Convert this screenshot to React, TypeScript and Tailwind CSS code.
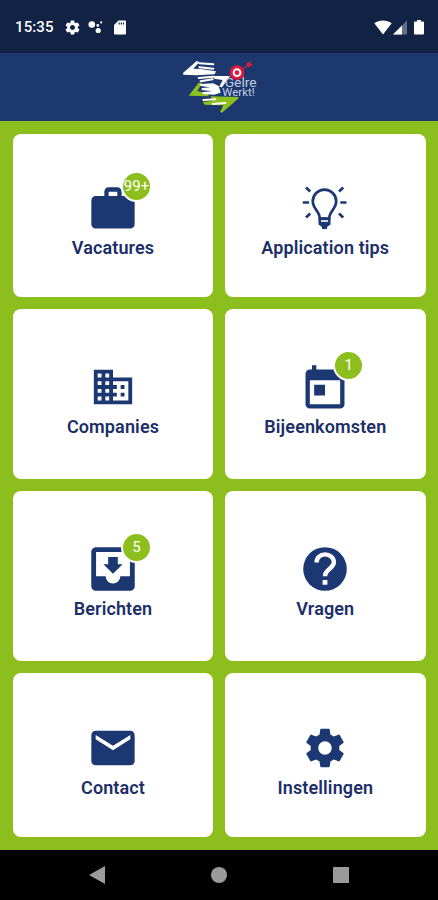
import React from 'react';

interface Tile {
  label: string;
  icon: React.ReactNode;
  badge?: string;
}

const WORK = 'M20 6h-4V4c0-1.11-.89-2-2-2h-4c-1.11 0-2 .89-2 2v2H4c-1.11 0-1.99.89-1.99 2L2 19c0 1.11.89 2 2 2h16c1.11 0 2-.89 2-2V8c0-1.11-.89-2-2-2zm-6 0h-4V4h4v2z';
const BUSINESS = 'M12 7V3H2v18h20V7H12zM6 19H4v-2h2v2zm0-4H4v-2h2v2zm0-4H4V9h2v2zm0-4H4V5h2v2zm4 12H8v-2h2v2zm0-4H8v-2h2v2zm0-4H8V9h2v2zm0-4H8V5h2v2zm10 12h-8v-2h2v-2h-2v-2h2v-2h-2V9h8v10zm-2-8h-2v2h2v-2zm0 4h-2v2h2v-2z';
const TODAY = 'M19 3h-1V1h-2v2H8V1H6v2H5c-1.11 0-1.99.9-1.99 2L3 19c0 1.1.89 2 2 2h14c1.1 0 2-.9 2-2V5c0-1.1-.9-2-2-2zm0 16H5V8h14v11zM7 10h5v5H7v-5z';
const INBOX = 'M19 3H4.99c-1.11 0-1.98.9-1.98 2L3 19c0 1.1.88 2 1.99 2H19c1.1 0 2-.9 2-2V5c0-1.1-.9-2-2-2zm0 12h-4c0 1.66-1.35 3-3 3s-3-1.34-3-3H4.99V5H19v10zm-3-5h-2V7h-4v3H8l4 4 4-4z';
const MAIL = 'M20 4H4c-1.1 0-1.99.9-1.99 2L2 18c0 1.1.9 2 2 2h16c1.1 0 2-.9 2-2V6c0-1.1-.9-2-2-2zm0 4l-8 5-8-5V6l8 5 8-5v2z';
const GEAR = 'M19.43 12.98c.04-.32.07-.64.07-.98s-.03-.66-.07-.98l2.11-1.65c.19-.15.24-.42.12-.64l-2-3.46c-.12-.22-.39-.3-.61-.22l-2.49 1c-.52-.4-1.08-.73-1.69-.98l-.38-2.65C14.46 2.18 14.25 2 14 2h-4c-.25 0-.46.18-.49.42l-.38 2.65c-.61.25-1.17.59-1.69.98l-2.49-1c-.23-.09-.49 0-.61.22l-2 3.46c-.13.22-.07.49.12.64l2.11 1.65c-.04.32-.07.65-.07.98s.03.66.07.98l-2.11 1.65c-.19.15-.24.42-.12.64l2 3.46c.12.22.39.3.61.22l2.49-1c.52.4 1.08.73 1.69.98l.38 2.65c.03.24.24.42.49.42h4c.25 0 .46-.18.49-.42l.38-2.65c.61-.25 1.17-.59 1.69-.98l2.49 1c.23.09.49 0 .61-.22l2-3.46c.12-.22.07-.49-.12-.64l-2.11-1.65zM12 15.5c-1.93 0-3.5-1.57-3.5-3.5s1.57-3.5 3.5-3.5 3.5 1.57 3.5 3.5-1.57 3.5-3.5 3.5z';

function Glyph({ d, className }: { d: string; className: string }) {
  return (
    <svg viewBox="0 0 24 24" fill="currentColor" className={`shrink-0 ${className}`}>
      <path d={d} />
    </svg>
  );
}

function Bulb() {
  return (
    <svg viewBox="0 0 46 44" fill="none" stroke="currentColor" strokeWidth="2.700" className="w-[46px] h-[44px] shrink-0 -mt-[2px]">
      <path d="M17.800 32.500c0-7-7-9.500-7-17.200a11.700 11.700 0 0 1 23.400 0c0 7.700-7 10.200-7 17.200z" />
      <path d="M16.500 31.500h12v7l-3.500 2.500v2h-5v-2l-3.500-2.500z" fill="currentColor" stroke="none" />
      <path d="M19 35h7" stroke="white" strokeWidth="1.600" />
      <path d="M.8 16.500h6.200M38.300 16.500h6.200M4 1.500l4.200 4M41.200 1.500l-4.200 4M4 31.500l4.200-4M41.200 31.500l-4.200-4" />
    </svg>
  );
}

function Help() {
  return (
    <svg viewBox="0 0 44 44" className="w-[44px] h-[44px] shrink-0">
      <circle cx="22" cy="22" r="21.800" fill="currentColor" />
      <path d="M13.600 15.600v-.4c0-4.600 3.700-7.800 8.400-7.800s8.900 3.200 8.900 7.900c0 6.500-8.900 6.400-8.900 14" fill="none" stroke="white" strokeWidth="4.400" />
      <path d="M19.600 33h4.800v4.800h-4.800z" fill="white" />
    </svg>
  );
}

const TILES: Tile[] = [
  { label: 'Vacatures', icon: <Glyph d={WORK} className="size-[52px]" />, badge: '99+' },
  { label: 'Application tips', icon: <Bulb /> },
  { label: 'Companies', icon: <Glyph d={BUSINESS} className="size-[46px]" /> },
  { label: 'Bijeenkomsten', icon: <Glyph d={TODAY} className="size-[52px] mt-1" />, badge: '1' },
  { label: 'Berichten', icon: <Glyph d={INBOX} className="size-[58px]" />, badge: '5' },
  { label: 'Vragen', icon: <Help /> },
  { label: 'Contact', icon: <Glyph d={MAIL} className="size-[52px]" /> },
  { label: 'Instellingen', icon: <Glyph d={GEAR} className="size-[46px]" /> },
];

function Logo() {
  return (
    <svg viewBox="0 9 300 204" className="w-[100px] h-[68px]">
      {/* green hand */}
      <path d="M86 98l10 2-14 24 32 4 2 11-60-2zM122 139l82 2 2 4-50 43-6-2 10-20-56-2-6-8 30-4z" fill="#8cc01d" />
      {/* white hand */}
      <path d="M80 33l8 3-18 20 22 1 46 7-4 9-56 3-38-2-1-5z" fill="white" />
      <path d="M88 40l42 3M88 52l42 4M86 84l44-4M92 94l36-6" stroke="white" strokeWidth="6" strokeLinecap="round" />
      <path d="M132 78h48l-24 34-8-2 10-20-26-4z" fill="white" />
      <path d="M90 102l40-2 16 8 6 20-20 6-36-2 4-6 26-2-32-4 2-6 24-2-28-4z" fill="white" />
      <path d="M100 150l36-2M128 162l38-3" stroke="white" strokeWidth="6" strokeLinecap="round" />
      {/* wordmark */}
      <g fill="#c3cfe4" fontFamily="Roboto, 'Liberation Sans', sans-serif" fontWeight="400">
        <text x="164" y="110" fontSize="37" textLength="96" lengthAdjust="spacingAndGlyphs">Gelre</text>
        <text x="157" y="139" fontSize="33" textLength="97" lengthAdjust="spacingAndGlyphs">Werkt!</text>
      </g>
      {/* target */}
      <path d="M202 68L236 45" stroke="#b5254b" strokeWidth="4" />
      <path d="M230 39l12-6 0 8 6 4-12 7-7-5z" fill="#d31f3d" />
      <circle cx="201" cy="68" r="22" fill="#e3173a" />
      <circle cx="201" cy="68" r="10" fill="none" stroke="white" strokeWidth="6" />
    </svg>
  );
}

function StatusBar() {
  return (
    <div className="h-[53px] shrink-0 bg-[#122245] flex items-center text-white pl-[15px] pr-[14px] pt-px">
      <span className="text-[15px] font-medium leading-none w-[39px] tracking-[0.1px]">15:35</span>
      <Glyph d={GEAR} className="size-[17px] ml-[10px]" />
      <svg viewBox="0 0 16 14" fill="currentColor" className="w-4 h-3.5 ml-[7px]">
        <circle cx="3.800" cy="4.500" r="3.300" />
        <circle cx="10.200" cy="10.500" r="2.600" />
        <circle cx="9.800" cy="5.400" r="1.400" />
        <circle cx="13.200" cy="2.400" r="1.100" />
      </svg>
      <svg viewBox="0 0 12 15" fill="currentColor" className="w-3 h-[15px] ml-[10px]">
        <path fillRule="evenodd" d="M4.500.5H11a1 1 0 0 1 1 1v12a1 1 0 0 1-1 1H1a1 1 0 0 1-1-1V5zM4.500 2.500v2h1.200v-2zM6.700 2.500v2h1.200v-2zM8.900 2.500v2h1.200v-2z" />
      </svg>
      <div className="ml-auto flex items-center">
        <svg viewBox="0 0 18 15" fill="currentColor" className="w-[18px] h-[15px]">
          <path d="M.3 3.300C5.500-.5 12.500-.5 17.700 3.300L9 14.500z" />
        </svg>
        <svg viewBox="0 0 14 15" fill="currentColor" className="w-[14px] h-[15px] ml-px">
          <path d="M14 .5v14H0z" opacity=".35" />
          <path d="M9 5.500v9H0z" />
        </svg>
        <svg viewBox="0 0 10 15" fill="currentColor" className="w-[10px] h-[15px] ml-[7px]">
          <path d="M3 0h4v1.500h2a1 1 0 0 1 1 1v11a1 1 0 0 1-1 1H1a1 1 0 0 1-1-1v-11a1 1 0 0 1 1-1h2z" />
        </svg>
      </div>
    </div>
  );
}

function TileCard({ label, icon, badge }: Tile) {
  return (
    <button className="bg-white rounded-[8px] flex flex-col items-center justify-center pt-[10px] text-[#1b3873]">
      <div className="relative w-[58px] h-[55px] flex items-center justify-center">
        {icon}
        {badge && (
          <span className="absolute -top-[10px] left-[37px] size-[31px] rounded-full border-2 border-white bg-[#8cbf1d] text-white text-[15px] leading-none flex items-center justify-center">
            {badge}
          </span>
        )}
      </div>
      <span className="text-[18px] leading-6 font-semibold tracking-[0.12px] text-[#1c2f68]">{label}</span>
    </button>
  );
}

export default function App() {
  return (
    <div className="w-[438px] h-[900px] flex flex-col overflow-hidden bg-black font-[Roboto,'Liberation_Sans',sans-serif]">
      <StatusBar />

      <header className="h-[68px] shrink-0 bg-[#1d386f] flex justify-center pl-[2px]">
        <Logo />
      </header>

      <main className="h-[729px] shrink-0 bg-[#8cbf1d] grid grid-cols-[200px_200.6px] grid-rows-[163px_170px_170px_164px] gap-3 pl-[13px] pt-[13px]">
        {TILES.map(tile => (
          <TileCard key={tile.label} {...tile} />
        ))}
      </main>

      {/* Navigation bar */}
      <nav className="flex-1 flex items-center justify-between pl-[89px] pr-[89px] text-[#9b9b9b]">
        <svg viewBox="0 0 16 18" fill="currentColor" className="w-4 h-[18px]">
          <path d="M16 0v18L0 9z" />
        </svg>
        <span className="size-4 rounded-full bg-[#9b9b9b]" />
        <span className="size-4 bg-[#9b9b9b]" />
      </nav>
    </div>
  );
}
